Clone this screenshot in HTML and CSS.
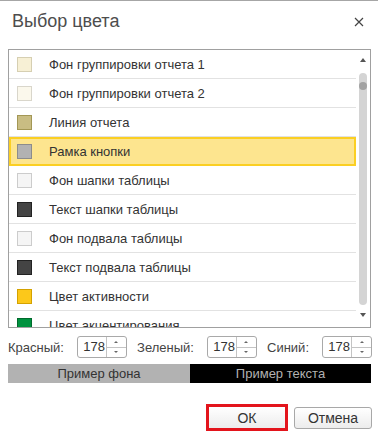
FILE: index.html
```html
<!DOCTYPE html>
<html lang="ru">
<head>
  <meta charset="UTF-8" />
  <meta name="viewport" content="width=device-width, initial-scale=1.0"/>
  <title>Выбор цвета</title>
  <link rel="stylesheet" href="styles.css">
</head>
<body>
  <div class="dialog">
    <div class="header">
      <div class="title">Выбор цвета</div>
      <svg class="close" width="10" height="10" viewBox="0 0 10 10">
        <path d="M1 1L9 9M9 1L1 9" stroke="#444" stroke-width="1.2" fill="none"/>
      </svg>
    </div>

    <div class="list">
      <div class="rows">
        <div class="row"><span class="swatch" style="background:#f7f0d5;border-color:#d6cfb2"></span>Фон группировки отчета 1</div>
        <div class="row"><span class="swatch" style="background:#fbf8ec;border-color:#d9d6cb"></span>Фон группировки отчета 2</div>
        <div class="row"><span class="swatch" style="background:#c9bd83;border-color:#a39755"></span>Линия отчета</div>
        <div class="row selected"><span class="swatch" style="background:#b2b2b2;border-color:#8c8c8c"></span>Рамка кнопки</div>
        <div class="row"><span class="swatch" style="background:#f5f5f5;border-color:#cccccc"></span>Фон шапки таблицы</div>
        <div class="row"><span class="swatch" style="background:#444444;border-color:#222222"></span>Текст шапки таблицы</div>
        <div class="row"><span class="swatch" style="background:#f5f5f5;border-color:#cccccc"></span>Фон подвала таблицы</div>
        <div class="row"><span class="swatch" style="background:#444444;border-color:#222222"></span>Текст подвала таблицы</div>
        <div class="row"><span class="swatch" style="background:#fcc81a;border-color:#d4a200"></span>Цвет активности</div>
        <div class="row"><span class="swatch" style="background:#00923f;border-color:#006a2c"></span>Цвет акцентирования</div>
      </div>
      <div class="scrollbar">
        <span class="arrow up"></span>
        <div class="track"><span class="thumb"></span></div>
        <span class="arrow down"></span>
      </div>
    </div>

    <div class="fields">
      <div class="field">
        <span class="label">Красный:</span>
        <div class="spin"><span class="value">178</span><span class="spin-btns"><i class="tri up"></i><i class="tri down"></i></span></div>
      </div>
      <div class="field">
        <span class="label">Зеленый:</span>
        <div class="spin"><span class="value">178</span><span class="spin-btns"><i class="tri up"></i><i class="tri down"></i></span></div>
      </div>
      <div class="field">
        <span class="label">Синий:</span>
        <div class="spin"><span class="value">178</span><span class="spin-btns"><i class="tri up"></i><i class="tri down"></i></span></div>
      </div>
    </div>

    <div class="sample">
      <div class="sample-bg">Пример фона</div>
      <div class="sample-text">Пример текста</div>
    </div>

    <div class="buttons">
      <button class="btn btn-default">ОК</button>
      <button class="btn">Отмена</button>
    </div>
  </div>
</body>
</html>
```

FILE: styles.css
```css
body {
  margin: 0;
  background-color: #ffffff;
  font-family: "Liberation Sans", Arial, sans-serif;
  color: #333333;
}
.dialog {
  width: 378px;
  height: 432px;
  box-sizing: border-box;
  border-top: 1px solid #a6a6a6;
}
.header {
  height: 48px;
  display: flex;
  justify-content: space-between;
  align-items: flex-start;
  padding: 8px 14px 0 12px;
  box-sizing: border-box;
}
.title {
  font-size: 18px;
  line-height: 24px;
  color: #4d4d4d;
}
.close {
  margin-top: 8px;
}
.list {
  margin: 0 7px 0 8px;
  height: 277px;
  border: 1px solid #a0a0a0;
  display: flex;
  overflow: hidden;
}
.rows {
  flex: 1;
  overflow: hidden;
}
.row {
  height: 29px;
  box-sizing: border-box;
  border-bottom: 1px solid #e2e2e2;
  display: flex;
  align-items: center;
  padding-left: 8px;
  font-size: 13px;
  white-space: nowrap;
}
.row.selected {
  border: 2px solid #fbcf23;
  padding-left: 6px;
  background-color: #fde58f;
}
.swatch {
  width: 15px;
  height: 15px;
  box-sizing: border-box;
  border: 1px solid #cccccc;
  margin-right: 17px;
  flex-shrink: 0;
}
.scrollbar {
  width: 14px;
  display: flex;
  flex-direction: column;
  align-items: center;
  padding: 8px 0 10px;
  box-sizing: border-box;
}
.arrow {
  width: 0;
  height: 0;
  border-left: 3px solid transparent;
  border-right: 3px solid transparent;
}
.arrow.up {
  border-bottom: 4px solid #555555;
}
.arrow.down {
  border-top: 4px solid #555555;
}
.track {
  flex: 1;
  width: 8px;
  margin: 11px 0 8px;
  border-radius: 4px;
  background-color: #d4d4d4;
  position: relative;
}
.thumb {
  position: absolute;
  left: 0;
  top: 9px;
  width: 8px;
  height: 8px;
  border-radius: 50%;
  background-color: #a2a2a2;
}
.fields {
  display: flex;
  justify-content: space-between;
  padding: 0 6px 0 8px;
  margin-top: 8px;
}
.field {
  display: flex;
  align-items: center;
  gap: 13px;
}
.label {
  font-size: 13px;
  color: #444444;
}
.spin {
  width: 50px;
  height: 22px;
  box-sizing: border-box;
  border: 1px solid #a9a9a9;
  border-radius: 3px;
  display: flex;
}
.value {
  width: 27px;
  font-size: 13px;
  line-height: 20px;
  text-align: right;
  padding-right: 1px;
  border-right: 1px solid #c4c4c4;
}
.spin-btns {
  flex: 1;
  display: flex;
  flex-direction: column;
}
.tri {
  flex: 1;
  display: flex;
  align-items: center;
  justify-content: center;
}
.tri.up {
  border-bottom: 1px solid #c4c4c4;
}
.tri::before {
  content: "";
  border-left: 2px solid transparent;
  border-right: 2px solid transparent;
}
.tri.up::before {
  border-bottom: 2px solid #666666;
}
.tri.down::before {
  border-top: 2px solid #666666;
}
.sample {
  display: flex;
  margin: 6px 7px 0 8px;
  height: 19px;
  font-size: 13px;
  line-height: 19px;
  text-align: center;
}
.sample-bg {
  width: 182px;
  background-color: #b2b2b2;
  color: #333333;
}
.sample-text {
  flex: 1;
  background-color: #000000;
  color: #b2b2b2;
}
.buttons {
  display: flex;
  justify-content: flex-end;
  align-items: center;
  gap: 6px;
  padding-right: 6px;
  margin-top: 21px;
}
.btn {
  width: 78px;
  height: 22px;
  box-sizing: border-box;
  border: 1px solid #a8a8a8;
  border-radius: 3px;
  background: linear-gradient(#ffffff, #ececec);
  font-family: "Liberation Sans", Arial, sans-serif;
  font-size: 14px;
  color: #333333;
  padding: 0;
}
.btn-default {
  width: 82px;
  height: 27px;
  border: 3px solid #e3141c;
  border-radius: 0;
}
```
